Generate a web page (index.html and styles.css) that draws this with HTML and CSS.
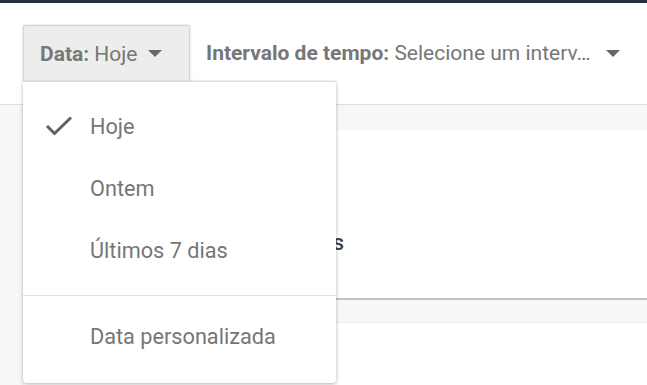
FILE: index.html
```html
<!DOCTYPE html>
<html lang="pt">
<head>
<meta charset="utf-8">
<link rel="stylesheet" href="styles.css">
</head>
<body>
<div class="topbar"></div>
<header class="filters">
  <div class="filter filter--open">
    <div class="filter-btn"><b>Data:</b>&nbsp;Hoje <span class="caret"></span></div>
    <div class="menu">
      <div class="menu-group">
        <div class="menu-item">
          <svg class="check" width="32" height="24" viewBox="0 0 32 24"><polyline points="3,10 10.5,17.5 27,1.5" fill="none" stroke="#616161" stroke-width="3"/></svg>
          <span>Hoje</span>
        </div>
        <div class="menu-item"><span>Ontem</span></div>
        <div class="menu-item"><span>Últimos 7 dias</span></div>
      </div>
      <div class="menu-group menu-group--last">
        <div class="menu-item"><span>Data personalizada</span></div>
      </div>
    </div>
  </div>
  <div class="filter filter--plain"><b>Intervalo de tempo:</b>&nbsp;Selecione um interv… <span class="caret"></span></div>
</header>
<main class="content">
  <section class="card card--main"><h2 class="card-title">Resultados</h2></section>
  <section class="card card--next"></section>
</main>
</body>
</html>
```
FILE: styles.css
```css
* { box-sizing: border-box; }
body {
  margin: 0;
  background: #f7f7f7;
  font-family: Roboto, "Noto Sans", sans-serif;
  overflow: hidden;
  height: 385px;
}
.topbar {
  height: 3px;
  background: #252c3a;
}
.filters {
  display: flex;
  align-items: stretch;
  background: #fff;
  padding: 22px 0 23px 23px;
  border-bottom: 1px solid #dedede;
  position: relative;
  z-index: 2;
}
.filter {
  position: relative;
  height: 56px;
  display: flex;
  align-items: center;
  font-size: 21px;
  color: #777;
  white-space: nowrap;
}
.filter b { font-weight: 700; color: #777; }
.filter-btn {
  height: 56px;
  width: 167px;
  display: flex;
  align-items: center;
  padding-left: 16px;
  background: #ededed;
  border: 1px solid #d4d4d4;
  border-bottom: none;
  border-radius: 2px 2px 0 0;
  box-shadow: -1px 0 3px rgba(0,0,0,0.08), 1px 0 3px rgba(0,0,0,0.08);
}
.caret {
  display: inline-block;
  width: 0;
  height: 0;
  border-left: 7px solid transparent;
  border-right: 7px solid transparent;
  border-top: 7px solid #666;
  margin-left: 11px;
}
.filter--plain { padding-left: 16px; }
.filter--plain .caret { margin-left: 15px; }
.menu {
  position: absolute;
  left: 0;
  top: 56px;
  width: 313px;
  background: #fff;
  border-top: 1px solid #dcdcdc;
  border-radius: 0 0 4px 4px;
  box-shadow: 0 2px 4px rgba(0,0,0,0.22), 0 0 2px rgba(0,0,0,0.12);
  z-index: 3;
}
.menu-group {
  padding: 13px 0 14px;
  border-bottom: 1px solid #e0e0e0;
}
.menu-group--last {
  border-bottom: none;
  padding: 9px 0 16px;
}
.menu-item {
  height: 62px;
  display: flex;
  align-items: center;
  padding-left: 67px;
  position: relative;
  font-size: 21.7px;
  color: #767676;
}
.check {
  position: absolute;
  left: 21px;
  top: 21px;
}
.content {
  padding: 25px 0 0 24px;
}
.card {
  background: #fff;
}
.card--main {
  height: 170px;
  border-bottom: 2px solid #c2c2c2;
  position: relative;
}
.card-title {
  margin: 0;
  padding: 100px 0 0 210px;
  font-size: 22px;
  font-weight: 500;
  color: #3a3f47;
  line-height: 26px;
}
.card--next {
  margin-top: 22px;
  height: 80px;
  border-top: 1px solid #eeeeee;
}
```
